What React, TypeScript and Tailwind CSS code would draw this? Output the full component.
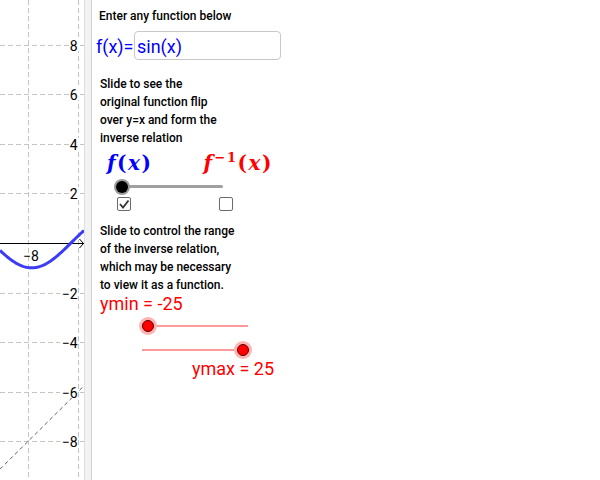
import React from "react";

const UX = 25;
const UY = 24.8;
const OX = 228;
const OY = 243;

function Graph() {
  const pts: string[] = [];
  for (let i = 0; i <= 84; i += 1) {
    const x = (i - OX) / UX;
    pts.push(`${i},${(OY - Math.sin(x) * UY).toFixed(2)}`);
  }
  const ys = [8, 6, 4, 2, -2, -4, -6, -8];
  const yAt = (k: number) => OY - k * UY;
  const lx0 = (0 - OX) / UX;
  const lx1 = (84 - OX) / UX;
  return (
    <svg width="84" height="480" viewBox="0 0 84 480" className="block">
      <g stroke="#c4c4c4" strokeWidth="1" strokeDasharray="5 3" fill="none">
        <line x1="28.5" y1="0" x2="28.5" y2="480" />
        <line x1="78.5" y1="0" x2="78.5" y2="480" />
        {ys.map((k) => (
          <line key={k} x1="0" y1={Math.round(yAt(k)) + 0.5} x2="84" y2={Math.round(yAt(k)) + 0.5} />
        ))}
      </g>
      <line
        x1="0"
        y1={OY - lx0 * UY}
        x2="84"
        y2={OY - lx1 * UY}
        stroke="#606060"
        strokeWidth="1"
        strokeDasharray="4 3"
      />
      <g fontFamily="Roboto, sans-serif" fontSize="14" fill="#000">
        {ys.map((k) => (
          <g key={k}>
            <rect x={k < 0 ? 60 : 70} y={Math.round(yAt(k)) - 6} width={k < 0 ? 18 : 9} height="12" fill="#fff" />
            <text x="77.5" y={Math.round(yAt(k)) + 5.5} textAnchor="end">
              {k < 0 ? `\u2212${-k}` : `${k}`}
            </text>
          </g>
        ))}
        <text x="31" y="261" textAnchor="middle">
          {"\u22128"}
        </text>
      </g>
      <line x1="0" y1="243.5" x2="84" y2="243.5" stroke="#000" strokeWidth="1" />
      <polyline points="79.5,239 83.5,243.5 79.5,248" stroke="#000" strokeWidth="1" fill="none" />
      <polyline points={pts.join(" ")} stroke="#3c3cf5" strokeWidth="3" fill="none" strokeLinejoin="round" />
    </svg>
  );
}

function CheckBox({ checked }: { checked: boolean }) {
  return (
    <div className="w-[14px] h-[14px] border border-[#6b6b6b] rounded-[2px] bg-white flex items-center justify-center">
      {checked && (
        <svg width="12" height="12" viewBox="0 0 12 12">
          <polyline points="2,6 5,9.5 10.5,2.5" stroke="#333" strokeWidth="1.8" fill="none" />
        </svg>
      )}
    </div>
  );
}

export default function App() {
  const sans = { fontFamily: "Roboto, 'Liberation Sans', sans-serif" };
  const math = { fontFamily: "'DejaVu Serif', 'Liberation Serif', serif" };
  return (
    <div className="w-[600px] h-[480px] bg-white flex overflow-hidden" style={sans}>
      <div className="w-[84px] h-[480px] shrink-0">
        <Graph />
      </div>
      <div className="w-[8px] h-[480px] shrink-0 bg-[#f3f3f3] border-l border-r border-l-[#dedede] border-r-[#cfcfcf]" />
      <div className="flex-1 flex flex-col">
        <div className="mt-[7px] ml-[7px] h-[18px] leading-[18px] text-[12px] font-medium text-black">
          Enter any function below
        </div>
        <div className="mt-[6px] ml-[4px] flex items-center h-[29px]">
          <div className="w-[38px] text-[18px] leading-[22px] pt-[2px] text-[#0000ff]">f(x)=</div>
          <div className="w-[147px] h-[29px] border border-[#c8c8c8] rounded-[4px] flex items-center pl-[2px] pt-[2px] text-[18px] leading-[22px] text-[#0000ff]">
            sin(x)
          </div>
        </div>
        <div className="mt-[15px] ml-[8px] text-[12px] leading-[18px] font-medium text-black">
          Slide to see the
          <br />
          original function flip
          <br />
          over y=x and form the
          <br />
          inverse relation
        </div>
        <div className="mt-[5px] h-[22px] leading-[22px] text-[20px] font-bold flex" style={math}>
          <span className="ml-[15px] text-[#0000ff] tracking-[1.5px]">
            <i>f</i>(<i>x</i>)
          </span>
          <span className="ml-[51px] text-[#ff0000] tracking-[1.5px]">
            <i>f</i>
            <span className="text-[13px] relative -top-[8px] ml-[1px]">−1</span>(<i>x</i>)
          </span>
        </div>
        <div className="mt-[5px] h-[16px] relative">
          <div className="absolute left-[30px] top-[6px] w-[101px] h-[3px] bg-[#a0a0a0] rounded-full" />
          <div className="absolute left-[22px] top-[0px] w-[16px] h-[16px] rounded-full bg-[#9a9a9a] flex items-center justify-center">
            <div className="w-[12px] h-[12px] rounded-full bg-black" />
          </div>
        </div>
        <div className="mt-[2px] flex">
          <div className="ml-[25px]">
            <CheckBox checked />
          </div>
          <div className="ml-[88px]">
            <CheckBox checked={false} />
          </div>
        </div>
        <div className="mt-[11px] ml-[8px] text-[12px] leading-[18px] font-medium text-black">
          Slide to control the range
          <br />
          of the inverse relation,
          <br />
          which may be necessary
          <br />
          to view it as a function.
        </div>
        <div className="ml-[8px] h-[20px] leading-[20px] text-[18px] text-[#ff0000]">ymin = -25</div>
        <div className="mt-[4px] h-[16px] relative">
          <div className="absolute left-[56px] top-[7px] w-[100px] h-[2px] bg-[#ff9a9a]" />
          <div className="absolute left-[47px] top-[-1px] w-[18px] h-[18px] rounded-full bg-[#ffb4b4] flex items-center justify-center">
            <div className="w-[12px] h-[12px] rounded-full bg-[#ff0000] border border-[#5a0000]" />
          </div>
        </div>
        <div className="mt-[8px] h-[16px] relative">
          <div className="absolute left-[50px] top-[7px] w-[101px] h-[2px] bg-[#ff9a9a]" />
          <div className="absolute left-[142px] top-[-1px] w-[18px] h-[18px] rounded-full bg-[#ffb4b4] flex items-center justify-center">
            <div className="w-[12px] h-[12px] rounded-full bg-[#ff0000] border border-[#5a0000]" />
          </div>
        </div>
        <div className="mt-[1px] ml-[100px] h-[20px] leading-[20px] text-[18px] text-[#ff0000]">ymax = 25</div>
      </div>
    </div>
  );
}
